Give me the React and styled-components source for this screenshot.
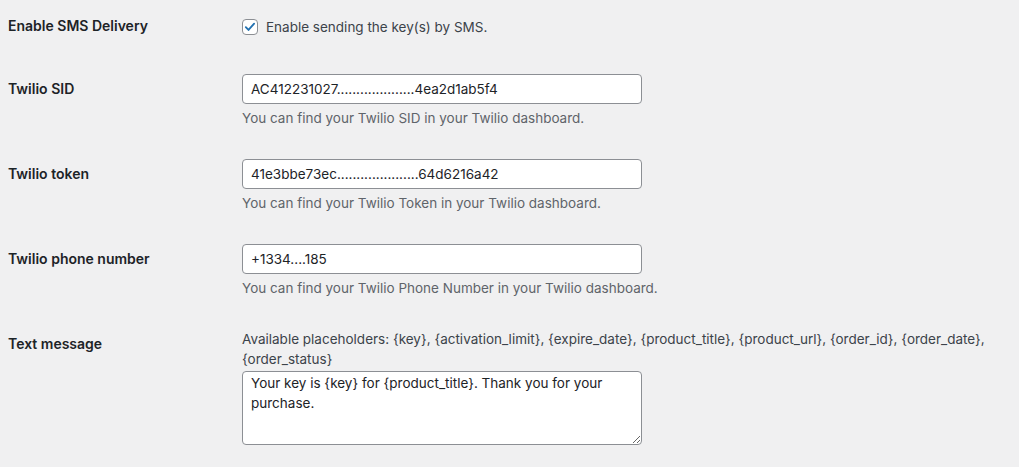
import styled, { createGlobalStyle } from 'styled-components';

const GlobalStyle = createGlobalStyle`
  html, body {
    margin: 0;
    padding: 0;
    background: #f0f0f1;
  }
  body {
    font-family: Inter, "Liberation Sans", Arial, sans-serif;
    color: #1d2327;
    font-size: 13.5px;
  }
`;

const Page = styled.div`
  width: 1019px;
  height: 467px;
  overflow: hidden;
  padding-left: 8px;
  box-sizing: border-box;
`;

const Row = styled.div`
  display: grid;
  grid-template-columns: 234px 1fr;
  padding-right: 10px;
`;

const Label = styled.div`
  padding-top: ${p => p.$top || 21}px;
  font-size: 14px;
  font-weight: 600;
  line-height: 18px;
  color: #1d2327;
`;

const Field = styled.div`
  padding: 15px 0 ${p => p.$bottom ?? 15}px;
  display: flex;
  flex-direction: column;
  align-items: flex-start;
`;

const CheckLine = styled.label`
  display: flex;
  align-items: center;
  gap: 8px;
  height: 24px;
  font-size: 13.5px;
  color: #3c434a;
`;

const CheckBox = styled.span`
  width: 16px;
  height: 16px;
  box-sizing: border-box;
  border: 1px solid #8c8f94;
  border-radius: 4px;
  background: #fff;
  display: flex;
  align-items: center;
  justify-content: center;
`;

const TextInput = styled.input`
  width: 400px;
  height: 30px;
  box-sizing: border-box;
  border: 1px solid #8c8f94;
  border-radius: 4px;
  background: #fff;
  padding: 0 8px;
  font-family: inherit;
  font-size: 13.5px;
  color: #1d2327;
  outline: none;
`;

const Description = styled.p`
  margin: 4px 0 0;
  font-size: 13.5px;
  line-height: 21px;
  color: #5f646a;
`;

const Hint = styled.div`
  font-size: 13.5px;
  line-height: 20px;
  color: #3c434a;
`;

const TextArea = styled.textarea`
  width: 400px;
  height: 74px;
  margin-top: 2px;
  box-sizing: border-box;
  border: 1px solid #8c8f94;
  border-radius: 4px;
  background: #fff;
  padding: 1px 8px;
  font-family: inherit;
  font-size: 13.5px;
  line-height: 20px;
  color: #1d2327;
  resize: vertical;
  outline: none;
`;

const textFields = [
  {
    label: 'Twilio SID',
    value: 'AC412231027....................4ea2d1ab5f4',
    help: 'You can find your Twilio SID in your Twilio dashboard.',
  },
  {
    label: 'Twilio token',
    value: '41e3bbe73ec.....................64d6216a42',
    help: 'You can find your Twilio Token in your Twilio dashboard.',
  },
  {
    label: 'Twilio phone number',
    value: '+1334....185',
    help: 'You can find your Twilio Phone Number in your Twilio dashboard.',
  },
];

const App = () => {
  return (
    <>
      <GlobalStyle />
      <Page>
        <Row>
          <Label $top={17}>Enable SMS Delivery</Label>
          <Field $bottom={20}>
            <CheckLine>
              <CheckBox>
                <svg width="16" height="16" viewBox="0 0 16 16">
                  <path d="M3.2 8.2l3.1 3.2 6.4-7.2" fill="none" stroke="#2271b1" strokeWidth="2.1" strokeLinecap="round" strokeLinejoin="round" />
                </svg>
              </CheckBox>
              Enable sending the key(s) by SMS.
            </CheckLine>
          </Field>
        </Row>

        {textFields.map(f => (
          <Row key={f.label}>
            <Label>{f.label}</Label>
            <Field>
              <TextInput type="text" defaultValue={f.value} />
              <Description>{f.help}</Description>
            </Field>
          </Row>
        ))}

        <Row>
          <Label>Text message</Label>
          <Field>
            <Hint>
              Available placeholders: {'{key}'}, {'{activation_limit}'}, {'{expire_date}'}, {'{product_title}'}, {'{product_url}'}, {'{order_id}'}, {'{order_date}'}, {'{order_status}'}
            </Hint>
            <TextArea defaultValue="Your key is {key} for {product_title}. Thank you for your purchase." />
          </Field>
        </Row>
      </Page>
    </>
  );
};

export default App;
